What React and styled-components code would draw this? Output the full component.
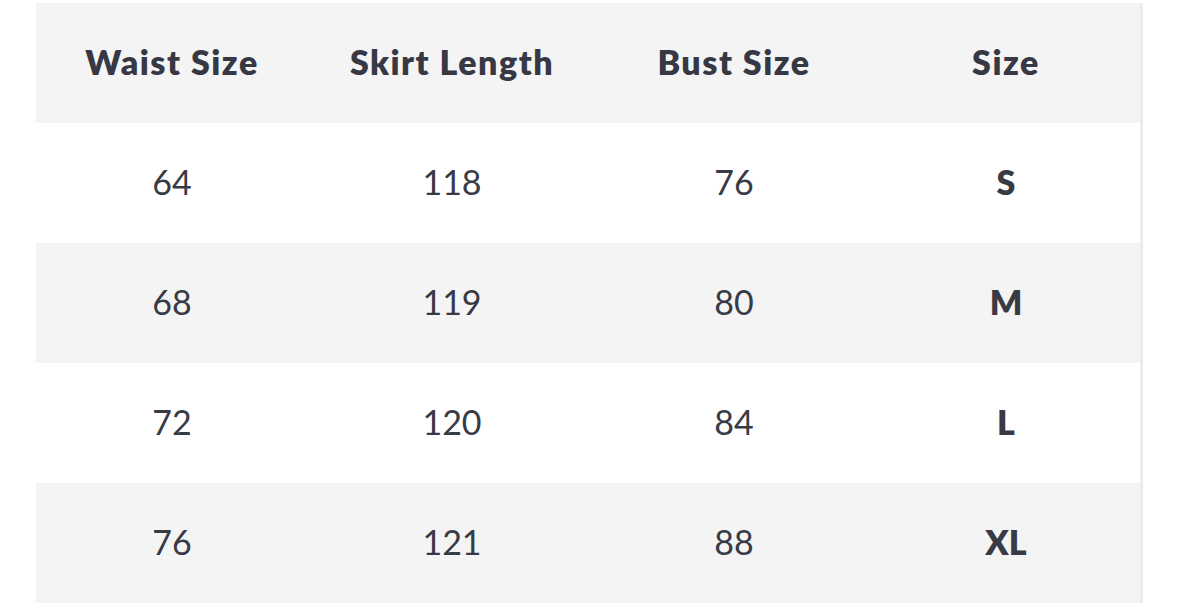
import React from 'react';
import styled, { createGlobalStyle } from 'styled-components';

const GlobalStyle = createGlobalStyle`
  html, body {
    margin: 0;
    padding: 0;
    background: #ffffff;
  }
  body {
    font-family: Lato, "Open Sans", sans-serif;
  }
`;

const headers = ['Waist Size', 'Skirt Length', 'Bust Size', 'Size'];

const rows = [
  ['64', '118', '76', 'S'],
  ['68', '119', '80', 'M'],
  ['72', '120', '84', 'L'],
  ['76', '121', '88', 'XL'],
];

const App = () => {
  return (
    <Page>
      <GlobalStyle />
      <Table>
        <Row $shaded>
          {headers.map((h) => (
            <HeadCell key={h}>{h}</HeadCell>
          ))}
        </Row>
        {rows.map((r, i) => (
          <Row key={r[3]} $shaded={i % 2 === 1}>
            <Cell>{r[0]}</Cell>
            <Cell>{r[1]}</Cell>
            <Cell>{r[2]}</Cell>
            <Cell $bold>{r[3]}</Cell>
          </Row>
        ))}
      </Table>
    </Page>
  );
};

const Page = styled.div`
  width: 1179px;
  height: 609px;
  padding: 3px 0 0 36px;
  box-sizing: border-box;
  overflow: hidden;
`;

const Table = styled.div`
  width: 1107px;
  border-right: 3px solid #ececec;
  box-sizing: border-box;
  display: flex;
  flex-direction: column;
`;

const Row = styled.div`
  display: grid;
  grid-template-columns: 272px 288px 276px 1fr;
  height: 120px;
  background: ${(p) => (p.$shaded ? '#f4f4f4' : '#ffffff')};
`;

const Cell = styled.div`
  display: flex;
  align-items: center;
  justify-content: center;
  font-size: 34px;
  font-weight: ${(p) => (p.$bold ? 800 : 400)};
  color: #383a46;
  padding-bottom: 4px;
`;

const HeadCell = styled(Cell)`
  font-weight: 800;
  letter-spacing: 1.5px;
  color: #363844;
`;

export default App;
